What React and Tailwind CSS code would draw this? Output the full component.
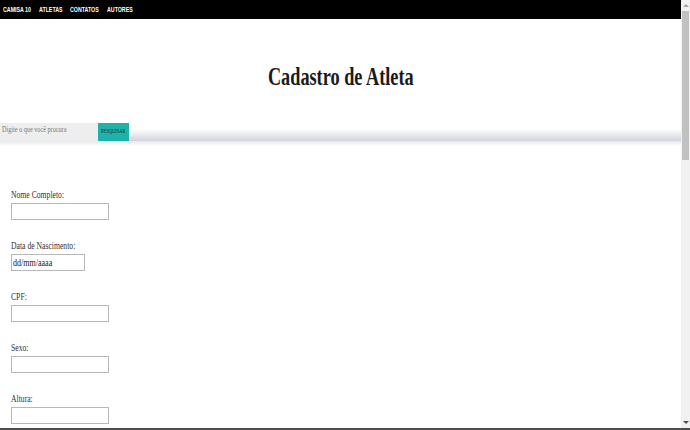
import React from "react";

const serif = { fontFamily: '"Liberation Serif", "Times New Roman", serif' };

function Squish({ className = "", children }) {
  return (
    <span className={"inline-block whitespace-nowrap origin-left scale-x-[0.73] " + className}>
      {children}
    </span>
  );
}

function Field({ label, width = "w-[98px]", value }) {
  return (
    <div className="shrink-0 flex flex-col items-start h-[51px]">
      <label className="h-[12px] leading-[12px] text-[10.5px] text-[#333]" style={serif}>
        <Squish>{label}</Squish>
      </label>
      <div
        className={`mt-[2px] h-[17px] ${width} border border-[#b8b8b8] bg-white flex items-center pl-[1px] text-[11px] text-[#222]`}
        style={serif}
      >
        {value ? <Squish>{value}</Squish> : null}
      </div>
    </div>
  );
}

export default function App() {
  const nav = [
    { t: "CAMISA 10", w: "w-[29px]" },
    { t: "ATLETAS", w: "w-[24px]" },
    { t: "CONTATOS", w: "w-[30px]" },
    { t: "AUTORES", w: "w-[26px]" },
  ];
  return (
    <div className="w-[690px] h-[430px] flex flex-col overflow-hidden bg-white">
      <div className="flex flex-1 min-h-0">
        <div className="flex-1 min-w-0 overflow-hidden flex flex-col">
          <nav
            className="shrink-0 h-[19px] bg-black flex items-center pl-[3px] gap-[7px] text-white font-bold text-[8px]"
            style={{ fontFamily: '"Liberation Sans", Arial, sans-serif' }}
          >
            {nav.map((n) => (
              <span key={n.t} className={`${n.w} whitespace-nowrap`}>
                <span className="inline-block origin-left scale-x-[0.66]">{n.t}</span>
              </span>
            ))}
          </nav>
          <header className="shrink-0 h-[122px] flex flex-col bg-[linear-gradient(to_bottom,#ffffff_0%,#ffffff_90%,#d0d4dc_100%)]">
            <div className="flex-1 flex items-center justify-center pt-[11px]">
              <h1
                className="text-[25px] leading-none font-bold text-[#1a1a1a] inline-block whitespace-nowrap scale-x-[0.73]"
                style={serif}
              >
                Cadastro de Atleta
              </h1>
            </div>
            <div className="flex h-[18px]">
              <div
                className="w-[98px] h-full bg-[#eeeeee] flex items-center pl-[2px] pb-[5px] text-[8.5px] text-[#777]"
                style={serif}
              >
                <Squish>Digite o que você procura</Squish>
              </div>
              <button
                className="w-[31px] h-full bg-[#20b2aa] flex items-center justify-center pb-[2px] text-[6px] text-[#1c2b2a]"
                style={serif}
              >
                <span className="inline-block whitespace-nowrap scale-x-[0.75]">PESQUISAR</span>
              </button>
            </div>
          </header>
          <div className="shrink-0 h-[5px] bg-[linear-gradient(to_bottom,#e4e7ec,#ffffff)]" />
          <form className="shrink-0 pl-[11px] pt-[43px] flex flex-col">
            <Field label="Nome Completo:" />
            <Field label="Data de Nascimento:" width="w-[74px]" value="dd/mm/aaaa" />
            <Field label="CPF:" />
            <Field label="Sexo:" />
            <Field label="Altura:" />
          </form>
        </div>
        <div className="w-[9px] bg-[#f1f1f1] flex flex-col items-center">
          <div className="h-[11px] flex items-center justify-center">
            <div className="w-0 h-0 border-l-[3px] border-r-[3px] border-b-[3px] border-l-transparent border-r-transparent border-b-[#a3a3a3]" />
          </div>
          <div className="w-[7px] h-[149px] bg-[#c1c1c1]" />
          <div className="flex-1" />
          <div className="h-[11px] flex items-center justify-center">
            <div className="w-0 h-0 border-l-[3px] border-r-[3px] border-t-[3px] border-l-transparent border-r-transparent border-t-[#505050]" />
          </div>
        </div>
      </div>
      <div className="h-[2px] bg-[#4d4d4d]" />
    </div>
  );
}
